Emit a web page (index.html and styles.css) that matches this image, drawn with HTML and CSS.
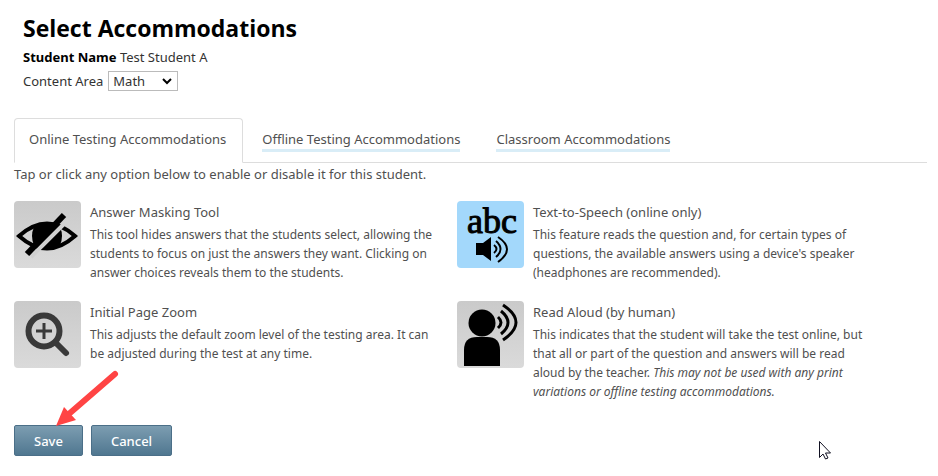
FILE: index.html
```html
<!DOCTYPE html>
<html lang="en">
<head>
  <meta charset="UTF-8">
  <meta name="viewport" content="width=device-width, initial-scale=1.0">
  <title>Select Accommodations</title>
  <link rel="stylesheet" href="styles.css">
</head>
<body>
  <form class="page">
    <header class="page-header">
      <h1>Select Accommodations</h1>
      <p><strong>Student Name</strong> Test Student A</p>
      <div class="content-area">
        <label for="content-area">Content Area</label>
        <div class="select-wrap">
          <select id="content-area">
            <option>Math</option>
          </select>
          <svg class="chevron" viewBox="0 0 10 7" aria-hidden="true"><path d="M1 1l4 4 4-4" fill="none" stroke="#000" stroke-width="2"/></svg>
        </div>
      </div>
    </header>

    <nav class="tabs">
      <a class="tab active" href="#online"><span>Online Testing Accommodations</span></a>
      <a class="tab" href="#offline"><span>Offline Testing Accommodations</span></a>
      <a class="tab" href="#classroom"><span>Classroom Accommodations</span></a>
    </nav>

    <p class="intro">Tap or click any option below to enable or disable it for this student.</p>

    <div class="options" id="online">
      <div class="option">
        <button type="button" class="option-icon" aria-pressed="false" aria-labelledby="masking">
          <svg viewBox="0 0 67 67" aria-hidden="true">
            <path d="M5 35Q33 10 61 35Q33 60 5 35Z" fill="none" stroke="#000" stroke-width="4"/>
            <path d="M20 26Q33 18 46 26Q50 35 46 44Q33 54 20 44Q16 35 20 26Z"/>
            <path d="M17 56L55 18" stroke="#d0d0d0" stroke-width="4"/>
            <path d="M13 53L50 14" stroke="#000" stroke-width="6"/>
          </svg>
        </button>
        <div class="option-text">
          <h2 id="masking">Answer Masking Tool</h2>
          <p>This tool hides answers that the students select, allowing the students to focus on just the answers they want. Clicking on answer choices reveals them to the students.</p>
        </div>
      </div>

      <div class="option">
        <button type="button" class="option-icon selected" aria-pressed="true" aria-labelledby="speech">
          <svg viewBox="0 0 67 67" aria-hidden="true">
            <text class="abc" x="35" y="32" text-anchor="middle">abc</text>
            <path d="M19 42h7l8-6v24l-8-6h-7z"/>
            <path d="M37 44q5 4 0 8M39 40q9 8 0 16M41 36q18 12 0 25" fill="none" stroke="#000" stroke-width="2"/>
          </svg>
        </button>
        <div class="option-text">
          <h2 id="speech">Text-to-Speech (online only)</h2>
          <p>This feature reads the question and, for certain types of questions, the available answers using a device's speaker (headphones are recommended).</p>
        </div>
      </div>

      <div class="option">
        <button type="button" class="option-icon" aria-pressed="false" aria-labelledby="zoom">
          <svg viewBox="0 0 67 67" aria-hidden="true" fill="none" stroke="#393939">
            <circle cx="30" cy="30" r="15.500" stroke-width="6"/>
            <path d="M22 30h16M30 22v16" stroke-width="3"/>
            <path d="M42 42l10 10" stroke-width="6" stroke-linecap="round"/>
          </svg>
        </button>
        <div class="option-text">
          <h2 id="zoom">Initial Page Zoom</h2>
          <p>This adjusts the default zoom level of the testing area. It can be adjusted during the test at any time.</p>
        </div>
      </div>

      <div class="option">
        <button type="button" class="option-icon" aria-pressed="false" aria-labelledby="aloud">
          <svg viewBox="0 0 67 67" aria-hidden="true">
            <circle cx="25" cy="22" r="13.500"/>
            <path d="M7 65V49Q7 36 20 36h10q13 0 13 13v16z"/>
            <path d="M41 16q6 5.500 0 11M44 10q14 11.500 0 23M46 4q26 17.500 0 35" fill="none" stroke="#000" stroke-width="3"/>
          </svg>
        </button>
        <div class="option-text">
          <h2 id="aloud">Read Aloud (by human)</h2>
          <p>This indicates that the student will take the test online, but that all or part of the question and answers will be read aloud by the teacher. <em>This may not be used with any print variations or offline testing accommodations.</em></p>
        </div>
      </div>
    </div>

    <div class="actions">
      <button type="submit" class="btn">Save</button>
      <button type="button" class="btn">Cancel</button>
      <svg class="arrow" viewBox="0 0 64 58" aria-hidden="true">
        <path d="M59 5L14 44" stroke="#ff4444" stroke-width="6" stroke-linecap="round"/>
        <path d="M0 57L8 38L20 51Z" fill="#ff4444"/>
      </svg>
    </div>
  </form>

  <svg class="cursor" viewBox="0 0 14 20" aria-hidden="true">
    <path d="M1.500 1.500v16l3.500-3.500 2.500 5 2.500-1-2.500-5h5z" fill="#fff" stroke="#112" stroke-width="1"/>
  </svg>
</body>
</html>
```
FILE: styles.css
```css
* {
  box-sizing: border-box;
}

body {
  margin: 0;
  font-family: "Noto Sans", "Open Sans", sans-serif;
  font-size: 13px;
  font-weight: 400;
  line-height: 20px;
  color: #505050;
  background: #fff;
}

h1, h2, p {
  margin: 0;
}

.page {
  padding: 12px 11px 20px 14px;
}

.page-header {
  padding-left: 9px;
  color: #333;
}

h1 {
  font-family: "Open Sans", sans-serif;
  font-size: 23px;
  font-weight: 700;
  line-height: 32px;
  color: #000;
}

.page-header p {
  padding: 3px 0 4px;
}

strong {
  font-weight: 700;
  color: #000;
}

.content-area {
  display: flex;
  align-items: center;
  gap: 5px;
}

.select-wrap {
  position: relative;
}

select {
  display: block;
  appearance: none;
  width: 70px;
  height: 20px;
  padding: 0 20px 0 4px;
  border: 1px solid #bbb;
  border-radius: 0;
  background: #fff;
  font: inherit;
  line-height: 18px;
  color: #333;
}

.chevron {
  position: absolute;
  top: 7px;
  right: 6px;
  width: 10px;
  height: 7px;
  pointer-events: none;
}

/* Tabs */
.tabs {
  display: flex;
  gap: 4px;
  margin-top: 27px;
  border-bottom: 1px solid #ddd;
}

.tab {
  padding: 10px 16px 9px 14px;
  border: 1px solid transparent;
  color: #505050;
  text-decoration: none;
}

.tab span {
  display: block;
  border-bottom: 3px solid #d9edf7;
}

.tab.active {
  margin-bottom: -1px;
  border-color: #ddd;
  border-bottom-color: #fff;
  border-radius: 4px 4px 0 0;
  background: #fff;
}

.tab.active span {
  border-color: transparent;
}

.intro {
  padding: 1px 0 17px;
}

/* Options */
.options {
  display: grid;
  grid-template-columns: 1fr 1fr;
  gap: 19px 22px;
  padding-right: 49px;
}

.option {
  display: flex;
  align-items: flex-start;
  gap: 9px;
}

.option-icon {
  flex: none;
  width: 67px;
  height: 67px;
  padding: 0;
  border: none;
  border-radius: 4px;
  background: linear-gradient(#cacaca, #dadada);
  cursor: pointer;
}

.option-icon.selected {
  background: #a3d8fb;
}

.option-icon svg {
  display: block;
  width: 100%;
}

.abc {
  font-family: "Liberation Serif", serif;
  font-size: 36px;
  font-weight: 400;
  stroke: #000;
  stroke-width: 1px;
}

h2 {
  padding-bottom: 2px;
  font-size: 13px;
  font-weight: 400;
  line-height: 22px;
}

.option-text p {
  font-size: 12px;
  line-height: 19px;
}

/* Buttons */
.actions {
  position: relative;
  display: flex;
  gap: 8px;
  margin-top: 24px;
}

.btn {
  height: 31px;
  padding: 0 19px;
  border: 1px solid #4b6f88;
  border-radius: 2px;
  background: linear-gradient(#7c9db1, #507790);
  font: inherit;
  font-weight: 500;
  color: #fff;
  cursor: pointer;
}

.arrow {
  position: absolute;
  left: 42px;
  bottom: 29px;
  width: 64px;
  height: 58px;
  pointer-events: none;
}

.cursor {
  position: absolute;
  left: 818px;
  top: 440px;
  width: 14px;
  height: 20px;
  pointer-events: none;
}
```
